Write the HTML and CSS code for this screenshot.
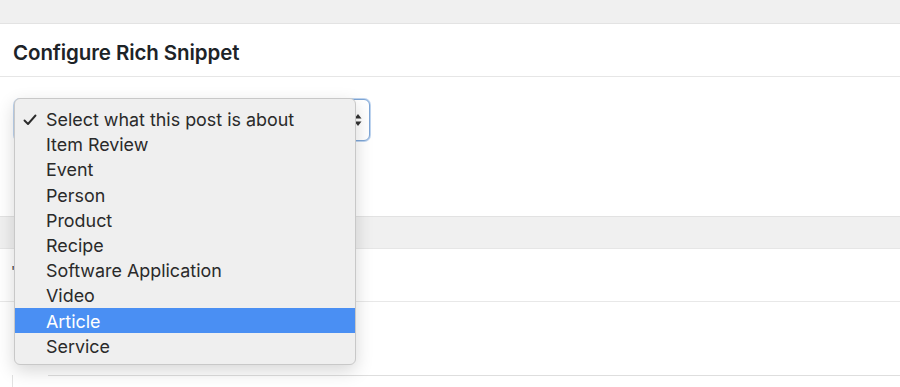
FILE: index.html
```html
<!DOCTYPE html>
<html lang="en">
<head>
  <meta charset="UTF-8" />
  <title>Configure Rich Snippet</title>
  <link rel="stylesheet" href="styles.css">
</head>
<body>
  <div class="topbar"></div>

  <div class="panel">
    <div class="panel-head">
      <h2>Configure Rich Snippet</h2>
    </div>

    <div class="panel-body">
      <div class="select-wrap">
        <div class="select-box">
          <span class="select-arrows">
            <svg width="8" height="14" viewBox="0 0 8 14">
              <path d="M4 1 L7.5 5.5 L0.5 5.5 Z" fill="#333"/>
              <path d="M4 13 L7.5 8.5 L0.5 8.5 Z" fill="#333"/>
            </svg>
          </span>
        </div>

        <!-- native select popup -->
        <ul class="dropdown">
          <li class="checked">
            <svg class="tick" width="14" height="12" viewBox="0 0 14 12">
              <path d="M1.5 6.5 L5 10 L12.5 1.5" fill="none" stroke="#2b2b2b" stroke-width="1.9" stroke-linecap="round" stroke-linejoin="round"/>
            </svg>
            Select what this post is about
          </li>
          <li>Item Review</li>
          <li>Event</li>
          <li>Person</li>
          <li>Product</li>
          <li>Recipe</li>
          <li>Software Application</li>
          <li>Video</li>
          <li class="hover">Article</li>
          <li>Service</li>
        </ul>
      </div>
    </div>
  </div>

  <div class="band"></div>

  <div class="row">
    <span class="peek">'</span>
  </div>
  <div class="row row-tall"></div>

  <div class="field">
    <div class="field-line"></div>
  </div>
</body>
</html>
```

FILE: styles.css
```css
* {
  box-sizing: border-box;
  margin: 0;
  padding: 0;
}

body {
  background: #fff;
  font-family: 'Inter', 'Liberation Sans', sans-serif;
  color: #1e1e1e;
  overflow: hidden;
}

.topbar {
  height: 24px;
  background: #f0f0f0;
  border-bottom: 1px solid #e3e3e3;
}

.panel-head {
  height: 53px;
  display: flex;
  align-items: center;
  padding: 4px 0 0 13px;
  border-bottom: 1px solid #e6e6e6;
}

.panel-head h2 {
  font-size: 20.5px;
  font-weight: 600;
  color: #1d2327;
  letter-spacing: -0.1px;
}

.panel-body {
  height: 139px;
  padding: 22px 0 0 14px;
}

.select-wrap {
  position: relative;
  width: 356px;
}

.select-box {
  height: 42px;
  border: 1px solid #7ea6d6;
  border-radius: 6px;
  box-shadow: 0 0 0 1px rgba(110, 160, 220, 0.45);
  background: #fff;
  display: flex;
  justify-content: flex-end;
  align-items: center;
  padding-right: 7px;
}

.select-arrows svg {
  display: block;
}

.dropdown {
  position: absolute;
  top: -1px;
  left: 0;
  width: 342px;
  list-style: none;
  background: #efefef;
  border: 1px solid #c8c8c8;
  border-radius: 6px;
  box-shadow: 0 6px 18px rgba(0, 0, 0, 0.16);
  padding: 7px 0 6px;
  z-index: 5;
}

.dropdown li {
  position: relative;
  height: 25.2px;
  line-height: 27px;
  padding-left: 31px;
  font-size: 17.9px;
  color: #2a2a2a;
}

.dropdown li.hover {
  background: #4a8ff3;
  color: #fff;
}

.dropdown .tick {
  position: absolute;
  left: 8px;
  top: 8px;
}

.band {
  height: 33px;
  background: #f0f0f0;
  border-top: 1px solid #e2e2e2;
  border-bottom: 1px solid #e6e6e6;
}

.row {
  height: 53px;
  border-bottom: 1px solid #e8e8e8;
  padding: 12px 0 0 11px;
}

.peek {
  font-size: 14px;
  color: #444;
}

.row-tall {
  height: 73px;
  border-bottom: none;
}

.field {
  margin-left: 12px;
  height: 20px;
  border-left: 1px solid #e2e2e2;
  margin-top: 4px;
}

.field-line {
  margin-top: -4px;
  margin-left: 35px;
  border-top: 1px solid #dedede;
}
```
